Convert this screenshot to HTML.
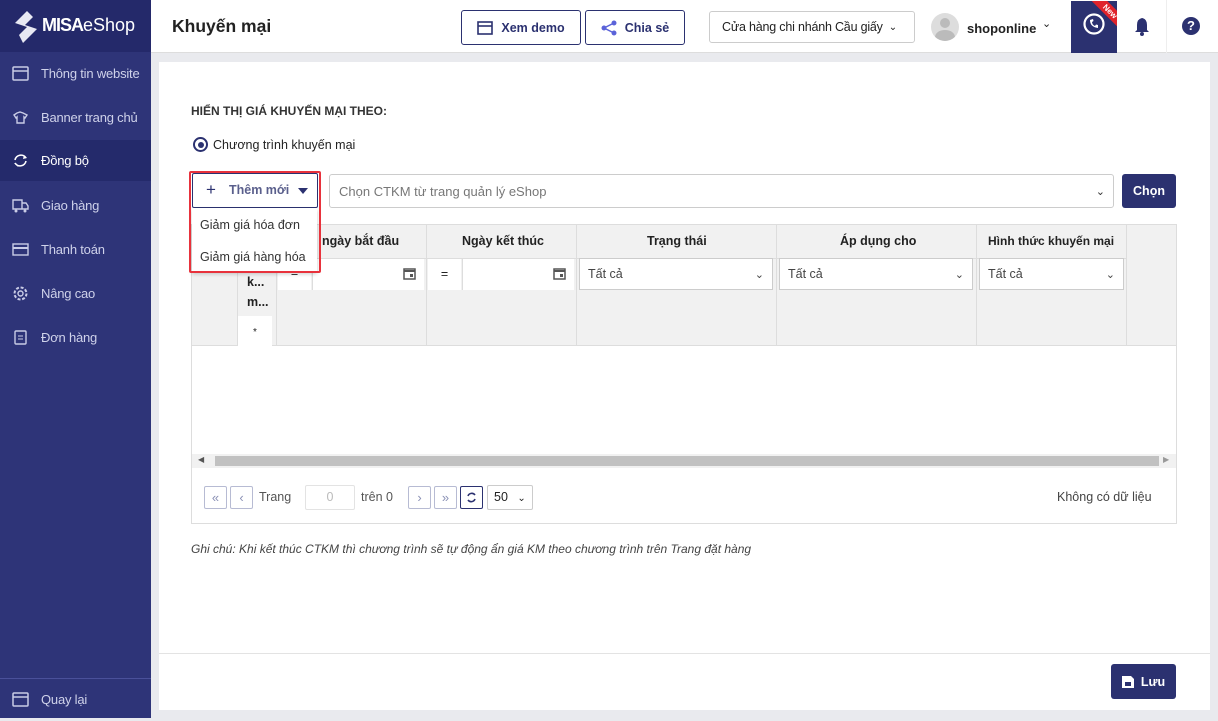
<!DOCTYPE html>
<html><head><meta charset="utf-8"><style>
*{box-sizing:border-box;margin:0;padding:0}
body{width:1218px;height:718px;overflow:hidden;font-family:"Liberation Sans",Arial,sans-serif;font-size:12.5px;color:#222;background:#e9eaee;position:relative}
.abs{position:absolute;white-space:nowrap}
.sb{left:0;top:0;width:151px;height:718px;background:#2e3478}
.logo{left:0;top:0;width:151px;height:52px;background:#24296a;color:#fff}
.nav{left:0;width:151px;height:44px;color:#cfd2ea;font-size:13px;display:flex;align-items:center;letter-spacing:-0.2px}
.nav svg{margin:0 12px 0 12px;flex:none}
.hdr{left:151px;top:0;width:1067px;height:53px;background:#fff;border-bottom:1px solid #ddd}
.btn{border:1px solid #2b3170;border-radius:3px;height:35px;display:flex;align-items:center;justify-content:center;font-weight:bold;color:#2b3170;font-size:12.5px;background:#fff}
.panel{left:159px;top:62px;width:1051px;height:648px;background:#fff}
.sel{background:#fff;border:1px solid #ccc;height:32px;display:flex;align-items:center;padding-left:8px;font-size:12.5px;color:#444}
.pb{width:23px;height:23px;border:1px solid #b7bbd3;border-radius:2px;display:flex;align-items:center;justify-content:center;color:#8a90b5;font-size:13px;background:#fff}
</style></head><body>
<div class="abs sb"></div>
<div class="abs logo">
<svg class="abs" style="left:13px;top:11px" width="26" height="32" viewBox="0 0 26 32"><path d="M14 0 L2 12 L14 16 L6 24 L10 32 L24 18 L12 14 L20 6Z" fill="#e8e9f3"/></svg>
<div class="abs" style="left:42px;top:15px;font-size:18px;color:#fff"><b style="letter-spacing:-1px">MISA</b>eShop</div>
</div>
<div class="abs nav" style="top:51px"><svg width="17" height="15"><rect x="1" y="1" width="15" height="13" rx="1" fill="none" stroke="#c9cce6" stroke-width="1.5"/><line x1="1" y1="5" x2="16" y2="5" stroke="#c9cce6" stroke-width="1.5"/></svg>Thông tin website</div>
<div class="abs nav" style="top:95px"><svg width="17" height="15"><path d="M5 3 L8 2 L11 3 L15 5 L13 8 L12 7 L12 13 L5 13 L5 7 L4 8 L2 5Z" fill="none" stroke="#c9cce6" stroke-width="1.4"/></svg>Banner trang chủ</div>
<div class="abs nav" style="top:140px;height:41px;background:#242a6b;color:#fff"><svg width="17" height="15"><path d="M3 7 A6 6 0 0 1 14 5 M14 8 A6 6 0 0 1 3 10" fill="none" stroke="#fff" stroke-width="1.6"/><path d="M12 2 L15 5 L11 6Z M5 11 L2 10 L6 14Z" fill="#fff"/></svg>Đồng bộ</div>
<div class="abs nav" style="top:183px"><svg width="17" height="15"><path d="M1 2 H10 V11 H1Z M10 5 H14 L16 8 V11 H10" fill="none" stroke="#c9cce6" stroke-width="1.4"/><circle cx="4" cy="13" r="1.5" fill="#c9cce6"/><circle cx="13" cy="13" r="1.5" fill="#c9cce6"/></svg>Giao hàng</div>
<div class="abs nav" style="top:227px"><svg width="17" height="15"><rect x="1" y="2" width="15" height="11" fill="none" stroke="#c9cce6" stroke-width="1.4"/><line x1="1" y1="6" x2="16" y2="6" stroke="#c9cce6" stroke-width="2"/></svg>Thanh toán</div>
<div class="abs nav" style="top:271px"><svg width="17" height="17"><circle cx="8.5" cy="8.5" r="6" fill="none" stroke="#c9cce6" stroke-width="2" stroke-dasharray="3 1.7"/><circle cx="8.5" cy="8.5" r="2.5" fill="none" stroke="#c9cce6" stroke-width="1.4"/></svg>Nâng cao</div>
<div class="abs nav" style="top:315px"><svg width="17" height="16"><rect x="3" y="2" width="11" height="13" rx="1" fill="none" stroke="#c9cce6" stroke-width="1.4"/><line x1="6" y1="7" x2="11" y2="7" stroke="#c9cce6"/><line x1="6" y1="10" x2="11" y2="10" stroke="#c9cce6"/></svg>Đơn hàng</div>
<div class="abs" style="left:0;top:678px;width:151px;height:1px;background:#4a509a"></div>
<div class="abs nav" style="top:677px"><svg width="17" height="15"><rect x="1" y="1" width="15" height="13" rx="1" fill="none" stroke="#c9cce6" stroke-width="1.5"/><line x1="1" y1="5" x2="16" y2="5" stroke="#c9cce6" stroke-width="1.5"/></svg>Quay lại</div>

<div class="abs hdr"></div>
<div class="abs" style="left:172px;top:16px;font-size:17.5px;font-weight:bold;color:#222">Khuyến mại</div>
<div class="abs btn" style="left:461px;top:10px;width:120px"><svg width="16" height="14" style="margin-right:8px"><rect x="1" y="1" width="14" height="12" fill="none" stroke="#2b3170" stroke-width="1.6"/><line x1="1" y1="5" x2="15" y2="5" stroke="#2b3170" stroke-width="1.6"/></svg>Xem demo</div>
<div class="abs btn" style="left:585px;top:10px;width:100px"><svg width="16" height="16" style="margin-right:8px"><circle cx="13" cy="3" r="2.5" fill="#5b63d9"/><circle cx="3" cy="8" r="2.5" fill="#5b63d9"/><circle cx="13" cy="13" r="2.5" fill="#5b63d9"/><path d="M13 3 L3 8 L13 13" stroke="#5b63d9" stroke-width="1.5" fill="none"/></svg>Chia sẻ</div>
<div class="abs" style="left:709px;top:11px;width:206px;height:32px;border:1px solid #ccc;border-radius:3px;display:flex;align-items:center;padding-left:12px;font-size:12.5px;letter-spacing:-0.2px">Cửa hàng chi nhánh Cầu giấy <span style="margin-left:6px;font-size:10px">&#8964;</span></div>
<div class="abs" style="left:931px;top:13px;width:28px;height:28px;border-radius:50%;background:#ddd;overflow:hidden"><div style="position:absolute;left:9px;top:5px;width:10px;height:10px;border-radius:50%;background:#bbb"></div><div style="position:absolute;left:4px;top:17px;width:20px;height:14px;border-radius:50%;background:#bbb"></div></div>
<div class="abs" style="left:967px;top:21px;font-size:13px;font-weight:bold">shoponline</div>
<div class="abs" style="left:1042px;top:17px;font-size:11px">&#8964;</div>
<div class="abs" style="left:1071px;top:1px;width:46px;height:52px;background:#2b3170;overflow:hidden">
<svg class="abs" style="left:11px;top:11px" width="24" height="24"><circle cx="12" cy="12" r="9.5" fill="none" stroke="#fff" stroke-width="2.2"/><path d="M8 8 Q8 15 16 16 L16 13 L14 12.5 L13 14 Q10 12.5 10 10 L11.5 9 L11 7Z" fill="#fff"/></svg>
<div class="abs" style="left:16px;top:5px;width:46px;height:11px;background:#e0232b;transform:rotate(45deg);color:#fff;font-size:8px;font-weight:bold;text-align:center;line-height:11px">New</div>
</div>
<svg class="abs" style="left:1133px;top:17px" width="18" height="20"><path d="M9 1 Q4 2 4 8 V13 L2 15 H16 L14 13 V8 Q14 2 9 1Z" fill="#2b3170"/><circle cx="9" cy="17" r="2" fill="#2b3170"/></svg>
<div class="abs" style="left:1166px;top:0;width:1px;height:53px;background:#eee"></div>
<div class="abs" style="left:1182px;top:17px;width:18px;height:18px;border-radius:50%;background:#2b3170;color:#fff;font-weight:bold;font-size:13px;text-align:center;line-height:18px">?</div>

<div class="abs panel"></div>
<div class="abs" style="left:191px;top:104px;font-weight:bold;font-size:12px;color:#333">HIỂN THỊ GIÁ KHUYẾN MẠI THEO:</div>
<div class="abs" style="left:193px;top:137px;width:15px;height:15px;border:2px solid #2b3170;border-radius:50%"><div style="margin:2.5px;width:6px;height:6px;border-radius:50%;background:#2b3170"></div></div>
<div class="abs" style="left:213px;top:138px;font-size:12.5px">Chương trình khuyến mại</div>

<div class="abs sel" style="left:329px;top:174px;width:785px;height:34px;border-radius:3px;color:#777;padding-left:9px;font-size:13px">Chọn CTKM từ trang quản lý eShop<span style="position:absolute;right:8px;color:#333;font-size:11px">&#8964;</span></div>
<div class="abs" style="left:1122px;top:174px;width:54px;height:34px;background:#2b3170;border-radius:3px;color:#fff;font-weight:bold;text-align:center;line-height:34px">Chọn</div>

<!-- table -->
<div class="abs" style="left:191px;top:224px;width:986px;height:300px;border:1px solid #ddd;background:#fff"></div>
<div class="abs" style="left:192px;top:225px;width:984px;height:121px;background:#f1f1f1;border-bottom:1px solid #ddd"></div>
<div class="abs" style="left:237px;top:225px;width:1px;height:121px;background:#ddd"></div>
<div class="abs" style="left:276px;top:225px;width:1px;height:121px;background:#ddd"></div>
<div class="abs" style="left:426px;top:225px;width:1px;height:121px;background:#ddd"></div>
<div class="abs" style="left:576px;top:225px;width:1px;height:121px;background:#ddd"></div>
<div class="abs" style="left:776px;top:225px;width:1px;height:121px;background:#ddd"></div>
<div class="abs" style="left:976px;top:225px;width:1px;height:121px;background:#ddd"></div>
<div class="abs" style="left:1126px;top:225px;width:1px;height:121px;background:#ddd"></div>
<div class="abs" style="left:192px;top:258px;width:934px;height:1px;background:#ddd"></div>
<div class="abs" style="left:247px;top:272px;font-weight:bold;line-height:20px">k...<br>m...</div>
<div class="abs" style="left:238px;top:316px;width:34px;height:30px;background:#fff;text-align:center;font-size:10px;line-height:34px">*</div>
<div class="abs" style="left:322px;top:234px;font-weight:bold">ngày bắt đầu</div>
<div class="abs" style="left:462px;top:234px;font-weight:bold">Ngày kết thúc</div>
<div class="abs" style="left:647px;top:234px;font-weight:bold">Trạng thái</div>
<div class="abs" style="left:840px;top:234px;font-weight:bold">Áp dụng cho</div>
<div class="abs" style="left:988px;top:234px;font-weight:bold;font-size:12px">Hình thức khuyến mại</div>
<div class="abs" style="left:278px;top:259px;width:33px;height:31px;background:#fff;text-align:center;line-height:28px">=</div>
<div class="abs" style="left:312px;top:259px;width:112px;height:31px;background:#fff;border-left:1px solid #ddd"><svg class="abs" style="right:8px;top:8px" width="13" height="13"><rect x="1" y="2" width="11" height="10" fill="none" stroke="#555" stroke-width="1.5"/><line x1="1" y1="4" x2="12" y2="4" stroke="#555" stroke-width="2"/><rect x="7" y="7" width="3" height="3" fill="#555"/></svg></div>
<div class="abs" style="left:428px;top:259px;width:33px;height:31px;background:#fff;text-align:center;line-height:31px">=</div>
<div class="abs" style="left:462px;top:259px;width:112px;height:31px;background:#fff;border-left:1px solid #ddd"><svg class="abs" style="right:8px;top:8px" width="13" height="13"><rect x="1" y="2" width="11" height="10" fill="none" stroke="#555" stroke-width="1.5"/><line x1="1" y1="4" x2="12" y2="4" stroke="#555" stroke-width="2"/><rect x="7" y="7" width="3" height="3" fill="#555"/></svg></div>
<div class="abs sel" style="left:579px;top:258px;width:194px">Tất cả<span style="position:absolute;right:8px;font-size:11px">&#8964;</span></div>
<div class="abs sel" style="left:779px;top:258px;width:194px">Tất cả<span style="position:absolute;right:8px;font-size:11px">&#8964;</span></div>
<div class="abs sel" style="left:979px;top:258px;width:145px">Tất cả<span style="position:absolute;right:8px;font-size:11px">&#8964;</span></div>
<!-- scrollbar -->
<div class="abs" style="left:192px;top:454px;width:984px;height:14px;background:#f1f1f1"></div>
<div class="abs" style="left:215px;top:456px;width:944px;height:10px;background:#c1c1c1"></div>
<div class="abs" style="left:198px;top:455px;font-size:8px;color:#555">&#9664;</div>
<div class="abs" style="left:1163px;top:455px;font-size:8px;color:#999">&#9654;</div>
<!-- pager -->
<div class="abs pb" style="left:204px;top:486px">«</div>
<div class="abs pb" style="left:230px;top:486px">‹</div>
<div class="abs" style="left:259px;top:490px;color:#555">Trang</div>
<div class="abs" style="left:305px;top:485px;width:50px;height:25px;border:1px solid #e3e3e3;border-radius:2px;text-align:center;line-height:23px;color:#bbb">0</div>
<div class="abs" style="left:361px;top:490px;color:#555">trên 0</div>
<div class="abs pb" style="left:408px;top:486px">›</div>
<div class="abs pb" style="left:434px;top:486px">»</div>
<div class="abs pb" style="left:460px;top:486px;border-color:#2b3170;color:#2b3170"><svg width="13" height="13"><path d="M3 5 A4 4 0 0 1 10 4 M10 8 A4 4 0 0 1 3 9" fill="none" stroke="#2b3170" stroke-width="1.6"/></svg></div>
<div class="abs" style="left:487px;top:485px;width:46px;height:25px;border:1px solid #ccc;border-radius:2px;padding-left:6px;line-height:23px">50 <span style="font-size:10px;margin-left:6px">&#8964;</span></div>
<div class="abs" style="left:1057px;top:490px;color:#444">Không có dữ liệu</div>

<div class="abs" style="left:191px;top:542px;font-style:italic;color:#444;font-size:12px">Ghi chú: Khi kết thúc CTKM thì chương trình sẽ tự động ẩn giá KM theo chương trình trên Trang đặt hàng</div>
<div class="abs" style="left:159px;top:653px;width:1051px;height:1px;background:#e3e3e3"></div>
<div class="abs" style="left:1111px;top:664px;width:65px;height:35px;background:#2b3170;border-radius:3px;color:#fff;font-weight:bold;display:flex;align-items:center;justify-content:center"><svg width="12" height="12" style="margin-right:7px"><path d="M0 0 H9 L12 3 V12 H0Z" fill="#fff"/><rect x="3" y="6" width="6" height="4" fill="#2b3170"/></svg>Lưu</div>

<!-- dropdown -->
<div class="abs" style="left:192px;top:173px;width:126px;height:35px;background:#fff;border:1px solid #2b3170;border-radius:2px"></div>
<div class="abs" style="left:206px;top:180px;font-size:17px;color:#2b3170">+</div>
<div class="abs" style="left:229px;top:183px;font-weight:bold;color:#5a5f8c;font-size:12.5px">Thêm mới</div>
<div class="abs" style="left:298px;top:188px;width:0;height:0;border-left:5px solid transparent;border-right:5px solid transparent;border-top:6px solid #2b3170"></div>
<div class="abs" style="left:192px;top:208px;width:125px;height:64px;background:#fff;box-shadow:0 2px 4px rgba(0,0,0,.2)"></div>
<div class="abs" style="left:200px;top:218px;font-size:12.5px;color:#333">Giảm giá hóa đơn</div>
<div class="abs" style="left:200px;top:250px;font-size:12.5px;color:#333">Giảm giá hàng hóa</div>
<div class="abs" style="left:189px;top:171px;width:132px;height:102px;border:2px solid #e8323c;border-radius:2px"></div>
</body></html>
